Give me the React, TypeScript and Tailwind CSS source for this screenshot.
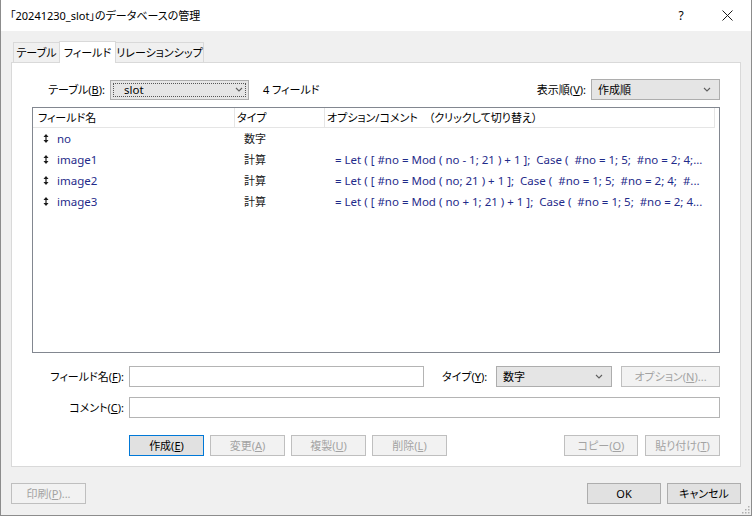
import React from 'react';

const font = { fontFamily: "'Noto Sans', 'Noto Sans CJK JP', sans-serif" };

interface Field {
  name: string;
  type: string;
  option: string;
}

const fields: Field[] = [
  { name: 'no', type: '数字', option: '' },
  { name: 'image1', type: '計算', option: '= Let ( [ #no = Mod ( no - 1; 21 ) + 1 ];  Case (  #no = 1; 5;  #no = 2; 4;...' },
  { name: 'image2', type: '計算', option: '= Let ( [ #no = Mod ( no; 21 ) + 1 ];  Case (  #no = 1; 5;  #no = 2; 4;  #...' },
  { name: 'image3', type: '計算', option: '= Let ( [ #no = Mod ( no + 1; 21 ) + 1 ];  Case (  #no = 1; 5;  #no = 2; 4...' },
];

function Chevron() {
  return (
    <svg width="8" height="5" viewBox="0 0 8 5" className="shrink-0">
      <path d="M1 1 L4 4 L7 1" fill="none" stroke="#606060" strokeWidth="1.1" />
    </svg>
  );
}

function SortIcon() {
  return (
    <svg width="6" height="9" viewBox="0 0 6 9" className="shrink-0">
      <path d="M3 0 L5.5 3 L0.5 3 Z" fill="#1a1a1a" />
      <rect x="2.4" y="3" width="1.2" height="3" fill="#1a1a1a" />
      <path d="M3 9 L5.5 6 L0.5 6 Z" fill="#1a1a1a" />
    </svg>
  );
}

interface BtnProps {
  children: React.ReactNode;
  w: string;
  disabled?: boolean;
  primary?: boolean;
}

function Btn({ children, w, disabled, primary }: BtnProps) {
  const cls = disabled
    ? 'border-[#bfbfbf] bg-[#f2f2f2] text-[#a3a3a3]'
    : primary
    ? 'border-[#0078d7] bg-[#e1e1e1] text-black'
    : 'border-[#adadad] bg-[#e1e1e1] text-black';
  return (
    <div className={`${w} h-[21px] border flex items-center justify-center text-[11px] leading-none whitespace-nowrap shrink-0 ${cls}`}>
      {children}
    </div>
  );
}

export default function App() {
  return (
    <div style={font} className="w-[752px] h-[516px] bg-[#f0f0f0] border-x border-b border-[#8c8c8c] flex flex-col text-black text-[11px] overflow-hidden whitespace-nowrap [font-feature-settings:'palt']">
      {/* title bar */}
      <div className="h-[31px] bg-white flex items-center shrink-0">
        <span className="pl-[9px] text-[11px] leading-none">「20241230_slot」のデータベースの管理</span>
        <div className="ml-auto flex items-center">
          <span className="w-[46px] text-center text-[12px] leading-none">?</span>
          <div className="w-[46px] flex justify-center mr-[1px]">
            <svg width="11" height="11" viewBox="0 0 11 11">
              <path d="M0.5 0.5 L10.5 10.5 M10.5 0.5 L0.5 10.5" stroke="#1a1a1a" strokeWidth="1" />
            </svg>
          </div>
        </div>
      </div>

      {/* body */}
      <div className="flex-1 flex flex-col px-[10px] pt-[9px]">
        {/* tabs */}
        <div className="flex items-end h-[22px] pl-[2px]">
          <div className="w-[47px] h-[20px] border border-b-0 border-[#d9d9d9] bg-[#f0f0f0] flex items-center justify-center leading-none">テーブル</div>
          <div className="w-[57px] h-[22px] border border-b-0 border-[#d9d9d9] bg-white flex items-center justify-center leading-none relative top-px z-10 -mx-px">フィールド</div>
          <div className="w-[89px] h-[20px] border border-b-0 border-[#d9d9d9] bg-[#f0f0f0] flex items-center justify-center leading-none">リレーションシップ</div>
        </div>

        {/* tab panel */}
        <div className="w-[730px] h-[405px] border border-[#d9d9d9] bg-white flex flex-col px-[20px] pt-[16px]">
          {/* table row */}
          <div className="flex items-center h-[21px] leading-none">
            <span className="w-[78px] text-right pr-[5px]">テーブル(<u>B</u>):</span>
            <div className="w-[139px] h-[20px] border border-[#adadad] bg-[#e5e5e5] p-[2px]">
              <div className="h-full border border-dotted border-[#555] flex items-center pl-[10px] pr-[2px]">
                <span className="flex-1 text-[11.5px]">slot</span>
                <Chevron />
              </div>
            </div>
            <span className="ml-[14px]">4 フィールド</span>
            <span className="ml-auto mr-[5px]">表示順(<u>V</u>):</span>
            <div className="w-[129px] h-[21px] border border-[#adadad] bg-[#e5e5e5] flex items-center pl-[6px] pr-[8px]">
              <span className="flex-1">作成順</span>
              <Chevron />
            </div>
          </div>

          {/* list */}
          <div className="mt-[7px] h-[246px] border border-[#828790] bg-white flex flex-col pr-[4px]">
            <div className="h-[20px] flex border-b border-r border-[#e5e5e5] leading-none shrink-0">
              <div className="w-[202px] pl-[5px] flex items-center border-r border-[#e5e5e5]">フィールド名</div>
              <div className="w-[90px] pl-[2px] flex items-center border-r border-[#e5e5e5]">タイプ</div>
              <div className="flex-1 pl-[2px] flex items-center whitespace-pre">オプション/コメント　（クリックして切り替え）</div>
            </div>
            {fields.map((f) => (
              <div key={f.name} className="h-[21px] flex items-center leading-none shrink-0">
                <div className="w-[202px] flex items-center pl-[10px] gap-[8px] text-[#1f2b8a] text-[11.5px]">
                  <SortIcon />
                  <span>{f.name}</span>
                </div>
                <div className="w-[90px] pl-[9px] text-[#1a1a1a]">{f.type}</div>
                <div className="flex-1 min-w-0 pl-[10px] text-[#1f2b8a] whitespace-pre text-[11.5px]">{f.option}</div>
              </div>
            ))}
          </div>

          {/* field name row */}
          <div className="mt-[13px] flex items-center h-[21px] leading-none">
            <span className="w-[97px] text-right pr-[5px]">フィールド名(<u>F</u>):</span>
            <div className="w-[295px] h-[21px] border border-[#b4b4b4] bg-white" />
            <span className="ml-[18px] w-[54px]">タイプ(<u>Y</u>):</span>
            <div className="w-[116px] h-[21px] border border-[#adadad] bg-[#e5e5e5] flex items-center pl-[6px] pr-[8px]">
              <span className="flex-1">数字</span>
              <Chevron />
            </div>
            <div className="ml-auto">
              <Btn w="w-[99px]" disabled>オプション(<u>N</u>)...</Btn>
            </div>
          </div>

          {/* comment row */}
          <div className="mt-[10px] flex items-center h-[21px] leading-none">
            <span className="w-[97px] text-right pr-[5px]">コメント(<u>C</u>):</span>
            <div className="flex-1 h-[21px] border border-[#b4b4b4] bg-white" />
          </div>

          {/* action buttons */}
          <div className="mt-[17px] flex items-center pl-[97px]">
            <div className="flex gap-[6px]">
              <Btn w="w-[75px]" primary>作成(<u>E</u>)</Btn>
              <Btn w="w-[75px]" disabled>変更(<u>A</u>)</Btn>
              <Btn w="w-[75px]" disabled>複製(<u>U</u>)</Btn>
              <Btn w="w-[75px]" disabled>削除(<u>L</u>)</Btn>
            </div>
            <div className="ml-auto flex gap-[7px]">
              <Btn w="w-[74px]" disabled>コピー(<u>O</u>)</Btn>
              <Btn w="w-[75px]" disabled>貼り付け(<u>T</u>)</Btn>
            </div>
          </div>
        </div>

        {/* footer */}
        <div className="mt-[16px] flex items-center">
          <Btn w="w-[75px]" disabled>印刷(<u>P</u>)...</Btn>
          <div className="ml-auto flex gap-[6px]">
            <Btn w="w-[74px]">OK</Btn>
            <Btn w="w-[74px]">キャンセル</Btn>
          </div>
        </div>
      </div>

      {/* resize grip */}
      <div className="flex justify-end h-0">
        <svg width="10" height="10" viewBox="0 0 10 10" className="relative -top-[11px] right-[1px]">
          {[
            [8, 2], [8, 5], [5, 5], [8, 8], [5, 8], [2, 8],
          ].map(([x, y]) => (
            <rect key={`${x}-${y}`} x={x} y={y} width="1.5" height="1.5" fill="#b0b0b0" />
          ))}
        </svg>
      </div>
    </div>
  );
}
